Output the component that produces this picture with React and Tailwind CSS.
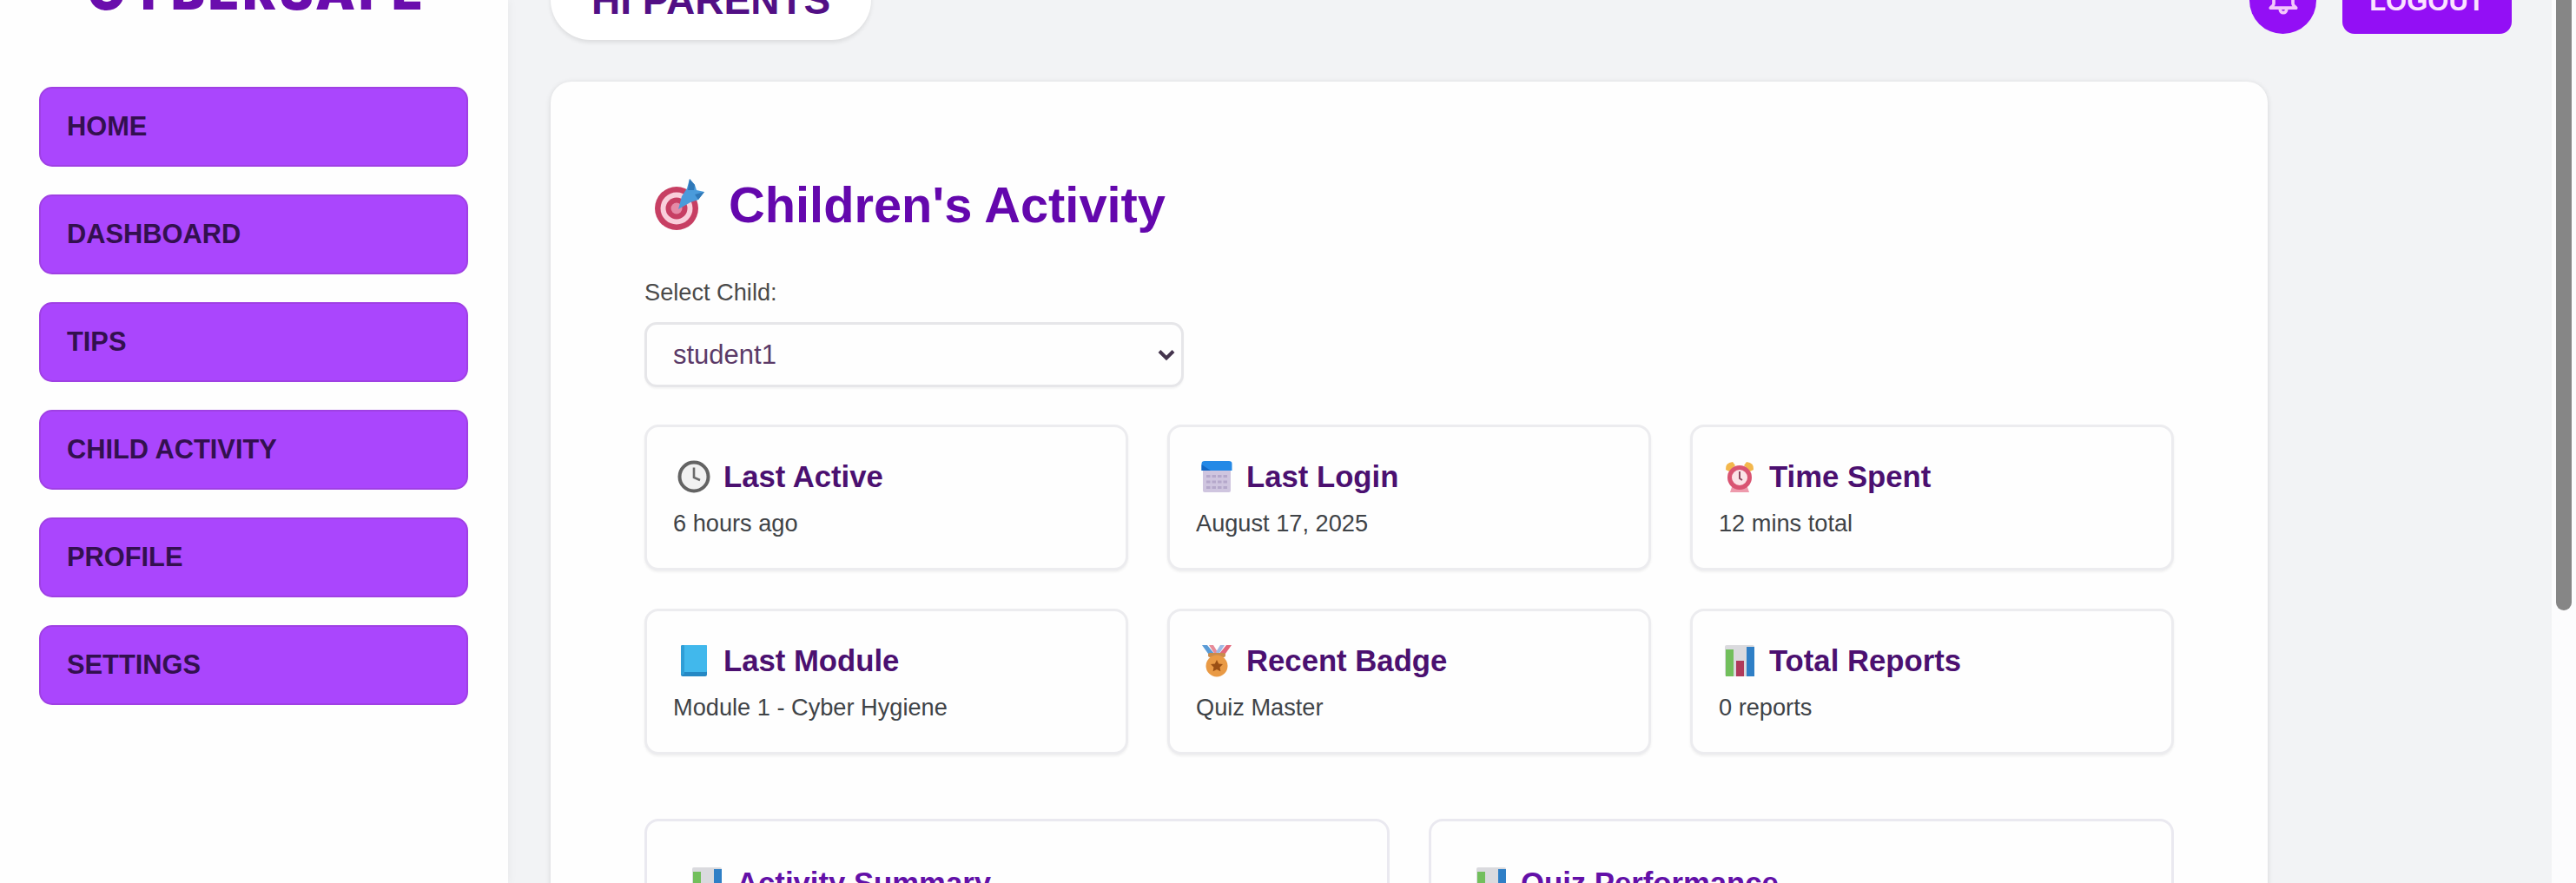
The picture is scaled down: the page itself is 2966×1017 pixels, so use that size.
const NAV = ["HOME", "DASHBOARD", "TIPS", "CHILD ACTIVITY", "PROFILE", "SETTINGS"];

function Target({ className }) {
  return (
    <svg viewBox="0 0 58 62" className={className}>
      <circle cx="25" cy="35" r="25" fill="#c73f63" />
      <circle cx="25" cy="35" r="18.500" fill="#f9cfdb" />
      <circle cx="25" cy="35" r="12.500" fill="#c73f63" />
      <circle cx="25" cy="35" r="6.500" fill="#e58aa6" />
      <path d="M27 36 L31 21 L37 12 L40 1 L46 8 L48 14 L57 16 L50 25 L41 28 Z" fill="#4a9bdb" />
      <path d="M38 14 L40 1 L46 8 L45 14 Z M46 19 L57 16 L50 25 Z" fill="#2f78b8" />
    </svg>
  );
}

function Clock() {
  return (
    <svg viewBox="0 0 38 38" className="h-[38px] w-[38px]">
      <circle cx="19" cy="19" r="16.500" fill="#f1f1f1" stroke="#636363" strokeWidth="4" />
      <path d="M19 8.500 V20 L26 23" fill="none" stroke="#6a6a6a" strokeWidth="2.600" />
    </svg>
  );
}

function Calendar() {
  return (
    <svg viewBox="0 0 38 38" className="h-[38px] w-[38px]">
      <rect x="3" y="9" width="32" height="28" rx="2" fill="#cfc5df" />
      <path d="M1.500 12 V4 Q1.500 1 5 1 H33 Q36.500 1 36.500 4 V12 Z" fill="#2489e6" />
      <path d="M1.500 12 V5 L12 12 Z" fill="#1268c6" />
      <path d="M7 18.500 H31 M7 25 H31 M7 31.500 H31" stroke="#b5a8cb" strokeWidth="3" strokeDasharray="4.500 2" />
    </svg>
  );
}

function Alarm() {
  return (
    <svg viewBox="0 0 38 38" className="h-[38px] w-[38px]">
      <path d="M3 11 Q2 3 11 2 L14 6 L7 13 Z" fill="#f3b74c" />
      <path d="M35 11 Q36 3 27 2 L24 6 L31 13 Z" fill="#f3b74c" />
      <path d="M8 37 L11 28 H27 L30 37 Z" fill="#ee9aac" />
      <circle cx="19" cy="20" r="11.500" fill="#fbe3e7" stroke="#d95472" strokeWidth="5" />
      <path d="M19 13 V21 L22 23" fill="none" stroke="#8b4a60" strokeWidth="2" />
    </svg>
  );
}

function Book() {
  return (
    <svg viewBox="0 0 38 38" className="h-[38px] w-[38px]">
      <rect x="4" y="1" width="30" height="36" rx="2" fill="#2588c4" />
      <rect x="7" y="1" width="27" height="31" rx="1" fill="#41b8ec" />
      <rect x="4" y="1" width="4" height="34" rx="1.500" fill="#2f9ed6" />
    </svg>
  );
}

function Medal() {
  return (
    <svg viewBox="0 0 38 38" className="h-[38px] w-[38px]">
      <path d="M2 1 H8 L17 12 L12 15 Z" fill="#5a9bd6" />
      <path d="M36 1 H30 L21 12 L26 15 Z" fill="#e2667a" />
      <path d="M10 1 H15 L20 9 L17 12 Z" fill="#e78b99" />
      <path d="M28 1 H23 L18 9 L21 12 Z" fill="#9db9e4" />
      <rect x="9" y="10" width="20" height="5" rx="2" fill="#c98b4b" />
      <circle cx="19" cy="25" r="12.500" fill="#e99a45" />
      <path d="M19 18 L21.200 22.500 L26 23 L22.500 26.500 L23.400 31.300 L19 29 L14.600 31.300 L15.500 26.500 L12 23 L16.800 22.500 Z" fill="#9a4f14" />
    </svg>
  );
}

function Bars() {
  return (
    <svg viewBox="0 0 38 38" className="h-[38px] w-[38px]">
      <rect x="2" y="1" width="34" height="36" rx="2" fill="#dadade" />
      <rect x="3" y="6" width="9" height="31" fill="#72bf5c" />
      <rect x="15" y="19" width="9" height="18" fill="#b03a5b" />
      <rect x="27" y="3" width="9" height="34" fill="#2f7fc6" />
    </svg>
  );
}

const STATS = [
  { icon: Clock, title: "Last Active", value: "6 hours ago" },
  { icon: Calendar, title: "Last Login", value: "August 17, 2025" },
  { icon: Alarm, title: "Time Spent", value: "12 mins total" },
  { icon: Book, title: "Last Module", value: "Module 1 - Cyber Hygiene" },
  { icon: Medal, title: "Recent Badge", value: "Quiz Master" },
  { icon: Bars, title: "Total Reports", value: "0 reports" },
];

function StatCard({ icon: Icon, title, value }) {
  return (
    <div className="h-[168px] rounded-[16px] border-[3px] border-[#ececef] bg-[#fefefe] px-[30px] pt-[32px] shadow-[0_2px_3px_rgba(0,0,0,0.06)]">
      <div className="flex h-[50px] items-center">
        <span className="mr-[15px] ml-[5px] shrink-0"><Icon /></span>
        <h3 className="text-[34.700px] leading-[50px] font-bold whitespace-nowrap text-[#4b1070]">{title}</h3>
      </div>
      <p className="mt-[10px] text-[27.200px] leading-[38px] whitespace-nowrap text-[#3f4347]">{value}</p>
    </div>
  );
}

function Panel({ title }) {
  return (
    <div className="h-[400px] rounded-[16px] border-[3px] border-[#eae9f0] bg-[#fefefe] px-[50px] pt-[46px]">
      <div className="flex h-[50px] items-center">
        <span className="mr-[15px] shrink-0"><Bars /></span>
        <h3 className="text-[34.700px] leading-[50px] font-bold whitespace-nowrap text-[#6310a8]">{title}</h3>
      </div>
    </div>
  );
}

export default function App() {
  return (
    <div className="flex h-[1017px] w-[2966px] overflow-hidden bg-[#f2f3f5] font-['Liberation_Sans',Arial,sans-serif]">
      <aside className="z-10 flex w-[585px] shrink-0 flex-col bg-[#fefefe] pr-[46px] pl-[45px] shadow-[2px_0_10px_rgba(0,0,0,0.04)]">
        <h1 className="-mt-[43px] h-[143px] pl-[7px] text-center font-[Inter] text-[58px] leading-[66px] font-black tracking-[4px] whitespace-nowrap text-[#6a0dad]">CYBERSAFE</h1>
        <nav className="flex flex-col gap-[32px]">
          {NAV.map((label) => (
            <a key={label} className="flex h-[92px] items-center rounded-[15px] border-2 border-[#9f40e4] bg-[#aa46fd] px-[30px] pt-px text-[30.800px] leading-none font-bold text-[#33104f]">
              {label}
            </a>
          ))}
        </nav>
      </aside>

      <div className="flex w-[2353px] shrink-0 flex-col pr-[46px] pl-[49px]">
        <header className="-mt-[46px] flex h-[92px] shrink-0 items-center justify-between">
          <div className="flex h-[92px] items-center rounded-full bg-white px-[47px] shadow-[0_3px_5px_rgba(0,0,0,0.09)]">
            <span className="text-[46px] leading-none font-bold whitespace-nowrap text-[#520f85]">HI PARENTS</span>
          </div>
          <div className="flex items-center gap-[30px]">
            <button className="flex h-[77px] w-[77px] items-center justify-center rounded-full bg-[#930ff5]">
              <svg viewBox="0 0 24 24" className="h-[44px] w-[44px]" fill="none" stroke="#f3c6fb" strokeWidth="2" strokeLinecap="round" strokeLinejoin="round">
                <path d="M15 17h5l-1.400-1.400A2 2 0 0 1 18 14.200V11a6 6 0 0 0-4-5.660V5a2 2 0 1 0-4 0v.34A6 6 0 0 0 6 11v3.200a2 2 0 0 1-.6 1.400L4 17h5m5 0v1a2 2 0 1 1-4 0v-1m5 0H9" />
              </svg>
            </button>
            <button className="flex h-[78px] w-[195px] items-center justify-center rounded-[14px] bg-[#930ff5] pt-[2px] text-[31px] leading-none font-bold text-[#fbe3ff]">LOGOUT</button>
          </div>
        </header>

        <main className="mt-[48px] h-[1100px] w-[1977px] shrink-0 rounded-[24px] bg-[#fefefe] px-[108px] pt-[105px] shadow-[0_1px_6px_rgba(0,0,0,0.12)]">
          <h2 className="flex h-[74px] items-center text-[57.800px] leading-[74px] font-bold whitespace-nowrap text-[#6407ad]">
            <Target className="mr-[27px] ml-[12px] h-[62px] w-[58px]" />
            Children's Activity
          </h2>
          <label className="mt-[43px] block h-[42px] text-[27.200px] leading-[42px] text-[#4a4a4a]">Select Child:</label>
          <div className="mt-[13px] flex h-[75px] w-[621px] items-center justify-between rounded-[14px] border-[3px] border-[#e6e6e9] bg-[#fefefe] pr-[7px] pl-[30px] shadow-[0_2px_2px_rgba(0,0,0,0.04)]">
            <span className="text-[31px] leading-none text-[#5b3a68]">student1</span>
            <svg viewBox="0 0 20 14" className="h-[14px] w-[20px]" fill="none" stroke="#44344d" strokeWidth="4">
              <path d="M2 2.500 L10 10.500 L18 2.500" />
            </svg>
          </div>

          <section className="mt-[43px] grid grid-cols-3 gap-x-[45px] gap-y-[44px]">
            {STATS.map((s) => (
              <StatCard key={s.title} {...s} />
            ))}
          </section>
          <section className="mt-[74px] grid grid-cols-2 gap-x-[45px]">
            <Panel title="Activity Summary" />
            <Panel title="Quiz Performance" />
          </section>
        </main>
      </div>

      <div className="flex w-[28px] shrink-0 justify-center bg-[#fcfcfd]">
        <div className="h-[703px] w-[18px] rounded-b-full bg-[#868686]" />
      </div>
    </div>
  );
}
